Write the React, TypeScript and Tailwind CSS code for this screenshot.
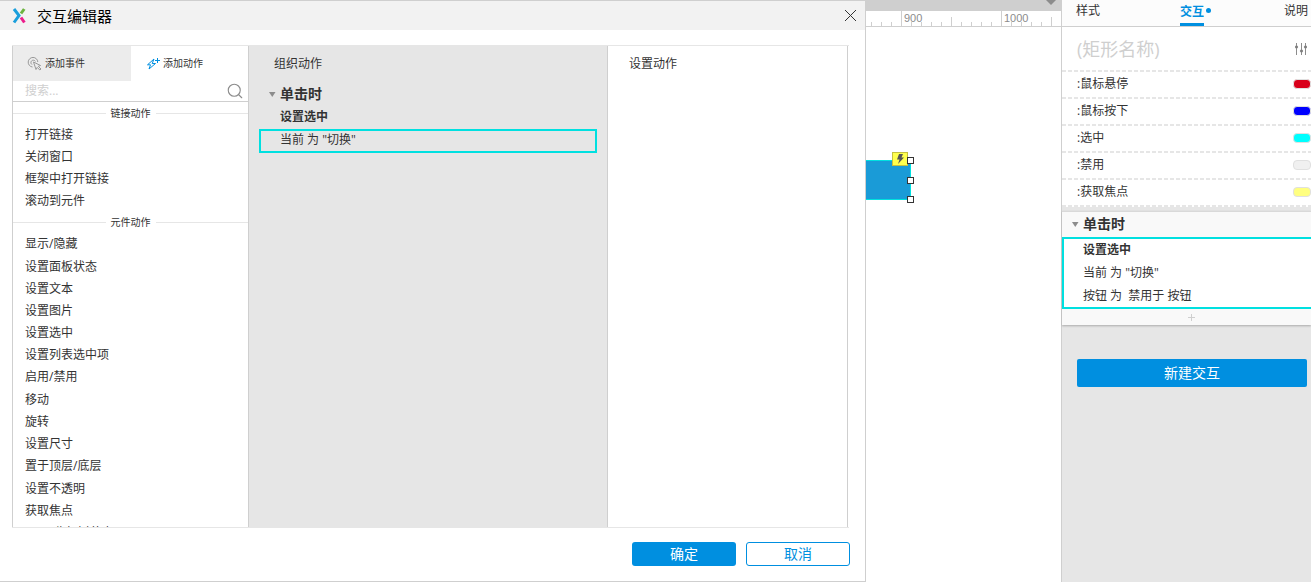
import { useState } from 'react'
import { Search } from 'lucide-react'

const sections = [
  {
    title: '链接动作',
    actions: ['打开链接', '关闭窗口', '框架中打开链接', '滚动到元件'],
  },
  {
    title: '元件动作',
    actions: [
      '显示/隐藏',
      '设置面板状态',
      '设置文本',
      '设置图片',
      '设置选中',
      '设置列表选中项',
      '启用/禁用',
      '移动',
      '旋转',
      '设置尺寸',
      '置于顶层/底层',
      '设置不透明',
      '获取焦点',
      '展开/收起树节点',
    ],
  },
]

const styleStates = [
  { name: ':鼠标悬停', color: 'bg-[#d9001b]' },
  { name: ':鼠标按下', color: 'bg-[#0000ff]' },
  { name: ':选中', color: 'bg-[#00ffff]' },
  { name: ':禁用', color: 'bg-[#f0f0f0]' },
  { name: ':获取焦点', color: 'bg-[#ffff80]' },
]

const ticks = Array.from({ length: 19 }, (_, i) => 870 + i * 10)

function Logo() {
  return (
    <svg className="h-4 w-4" viewBox="0 0 16 16" fill="none" strokeWidth="3">
      <path d="M3 1 L8 7.5 L3 14.5" stroke="#1a9fdc" />
      <path d="M13.2 1 L10 5.5" stroke="#6cb33f" />
      <path d="M10 9.5 L13.4 14.5" stroke="#ec1c8c" />
    </svg>
  )
}

function ClickIcon() {
  return (
    <svg className="h-4 w-4" viewBox="0 0 16 16" fill="none" stroke="#999">
      <path d="M5.5 11 A4.8 4.8 0 1 1 10.8 6" />
      <path d="M5 8.6 A2.4 2.4 0 1 1 8.4 5.4" />
      <path d="M6.5 6 L13.5 9.5 L11.3 10.3 L14 13 L12.8 14 L10.2 11.4 L9 13.5 Z" fill="#ececec" />
    </svg>
  )
}

function BoltPlusIcon() {
  return (
    <svg className="h-4 w-4" viewBox="0 0 16 16" fill="none" stroke="#008fe0">
      <path d="M9 3 L2.5 8.8 H5.5 L4 13 L10.5 7.5 H7.2 Z" />
      <path d="M12.5 2 V7 M10 4.5 H15" />
    </svg>
  )
}

function Caret() {
  return (
    <svg className="h-2 w-2" viewBox="0 0 8 8" fill="#8c8c8c">
      <path d="M1 2 H7.5 L4.25 7 Z" />
    </svg>
  )
}

function DashedLine() {
  return <div className="h-0.5 bg-[repeating-linear-gradient(90deg,#e6e6e6_0_4px,#fff_4px_6px)]" />
}

function ActionList() {
  return (
    <div className="min-h-0 flex-1 overflow-hidden pt-px">
      {sections.map((section) => (
        <section key={section.title}>
          <h3 className="flex h-[21px] items-center gap-[5px] text-[10px]">
            <span className="h-px flex-1 bg-[#e6e6e6]" />
            {section.title}
            <span className="h-px flex-1 bg-[#e6e6e6]" />
          </h3>
          <ul>
            {section.actions.map((action) => (
              <li key={action}>
                <button
                  className={`flex w-full px-3 text-left leading-[22px] ${action.includes('/') ? 'h-[23px]' : 'h-[22px]'}`}
                >
                  {action}
                </button>
              </li>
            ))}
          </ul>
        </section>
      ))}
    </div>
  )
}

function EditorDialog() {
  const [query, setQuery] = useState('')

  return (
    <div
      role="dialog"
      aria-label="交互编辑器"
      className="flex w-[866px] shrink-0 flex-col border-t border-r border-b border-[#cfcfcf] bg-white"
    >
      <header className="flex h-[29px] shrink-0 items-center gap-2.5 bg-[#f2f2f2] pr-2 pl-[11px]">
        <Logo />
        <h1 className="flex-1 text-[15px] leading-6 text-black">交互编辑器</h1>
        <button aria-label="关闭">
          <svg className="h-[13px] w-[13px]" viewBox="0 0 13 13" stroke="#333">
            <path d="M1 1 L12 12 M12 1 L1 12" />
          </svg>
        </button>
      </header>

      <div className="mt-[15px] mr-4 ml-3 flex min-h-0 flex-1 border-y border-[#e6e6e6] pr-px">
        <div className="flex w-[236px] flex-col border-l border-[#cfcfcf]">
          <div className="flex h-[35px] shrink-0 text-[10px]">
            <button className="flex w-[118px] items-center gap-0.5 bg-[#ececec] pl-3.5">
              <ClickIcon />
              添加事件
            </button>
            <button className="flex flex-1 items-center gap-0.5 pl-3.5">
              <BoltPlusIcon />
              添加动作
            </button>
          </div>
          <label className="flex h-[21px] shrink-0 items-center border-b border-[#cfcfcf] pr-1 pl-3">
            <input
              value={query}
              onChange={(e) => setQuery(e.target.value)}
              placeholder="搜索..."
              aria-label="搜索"
              className="min-w-0 flex-1 outline-none placeholder:text-[#cfcfcf]"
            />
            <Search className="h-[18px] w-[18px] text-[#8c8c8c]" strokeWidth={1.5} />
          </label>
          <ActionList />
        </div>

        <div className="flex-1 border-x border-[#cfcfcf] bg-[#e6e6e6] px-2.5 pt-2">
          <h2 className="px-[15px] leading-5">组织动作</h2>
          <div className="mt-2 flex h-[23px] items-center gap-1 pl-[9px] text-sm font-bold">
            <Caret />
            单击时
          </div>
          <p className="pl-[21px] leading-6 font-bold">设置选中</p>
          <p className="h-6 border-2 border-[#00e0e0] pl-[19px] leading-[18px]">当前 为 "切换"</p>
        </div>

        <div className="w-[240px] border-r border-[#cfcfcf] px-[21px] pt-2">
          <h2 className="leading-5">设置动作</h2>
        </div>
      </div>

      <footer className="flex shrink-0 justify-end gap-2.5 px-[15px] pt-3.5 pb-[15px] text-sm">
        <button className="h-6 w-[104px] rounded-[3px] bg-[#008fe0] leading-6 text-white">确定</button>
        <button className="h-6 w-[104px] rounded-[3px] border border-[#008fe0] leading-[22px] text-[#008fe0]">
          取消
        </button>
      </footer>
    </div>
  )
}

function Canvas() {
  return (
    <main className="relative min-w-0 flex-1 overflow-hidden bg-white">
      <div className="flex h-[11px] justify-end bg-[#cfcfcf] pr-1">
        <svg className="h-[5px] w-3" viewBox="0 0 12 5" fill="#8c8c8c">
          <path d="M1 0 H11 L6 5 Z" />
        </svg>
      </div>
      <div className="flex h-4 items-end overflow-hidden border-b border-[#cfcfcf] pl-[5px]">
        {ticks.map((t) => (
          <span
            key={t}
            className={`w-2.5 shrink-0 border-l border-[#cfcfcf] pl-0.5 font-['Liberation_Sans'] text-[11px] leading-[14px] whitespace-nowrap text-[#8c8c8c] ${
              t % 100 === 0 ? 'h-[15px]' : t % 50 === 0 ? 'h-[9px]' : 'h-1'
            }`}
          >
            {t % 100 === 0 ? t : ''}
          </span>
        ))}
      </div>

      {/* selected widget */}
      <div className="absolute top-40 left-0 h-10 w-[45px] border-y border-r border-[#00e0e0] bg-[#1a9bd7]">
        <span className="absolute -top-[9px] right-[2px] flex h-3.5 w-4 items-center justify-center border border-[#c4c040] bg-[#ffff4d]">
          <svg className="h-2.5 w-2.5" viewBox="0 0 10 10" fill="#555">
            <path d="M4 0 H8 L6.5 3.5 H9 L3 10 L4.5 5.5 H2 Z" />
          </svg>
        </span>
        <span className="absolute -top-1 -right-1 h-[7px] w-[7px] border border-[#333] bg-white" />
        <span className="absolute top-4 -right-1 h-[7px] w-[7px] border border-[#333] bg-white" />
        <span className="absolute -right-1 -bottom-1 h-[7px] w-[7px] border border-[#333] bg-white" />
      </div>
    </main>
  )
}

function Inspector() {
  const [name, setName] = useState('')

  return (
    <aside className="w-[250px] shrink-0 border-l border-[#cfcfcf] bg-[#e6e6e6]">
      <nav className="flex h-[27px] items-start justify-between border-b border-[#cfcfcf] bg-[#fcfcfc] pr-[3px] pl-3.5">
        <button className="leading-[22px]">样式</button>
        <button className="relative h-[26px] border-b-[3px] border-[#008fe0] leading-[22px] font-bold text-[#008fe0]">
          交互
          <span className="absolute top-2 -right-[7px] h-[5px] w-[5px] rounded-full bg-[#008fe0]" />
        </button>
        <button className="leading-[22px]">说明</button>
      </nav>

      <div className="flex h-[43px] items-center bg-white pr-1 pl-[15px]">
        <input
          value={name}
          onChange={(e) => setName(e.target.value)}
          placeholder="(矩形名称)"
          aria-label="矩形名称"
          className="min-w-0 flex-1 text-lg outline-none placeholder:text-[#cfcfcf]"
        />
        <button aria-label="设置">
          <svg className="h-3 w-3" viewBox="0 0 12 12" stroke="#8c8c8c" fill="#777">
            <path d="M1.5 0 V12 M6.5 0 V12 M10.5 0 V12" />
            <circle cx="1.5" cy="4" r="1.2" />
            <circle cx="6.5" cy="8" r="1.2" />
            <circle cx="10.5" cy="4" r="1.2" />
          </svg>
        </button>
      </div>

      <DashedLine />
      <ul className="bg-white">
        {styleStates.map((s) => (
          <li key={s.name}>
            <div className="flex h-[25px] items-center justify-between pb-0.5 pl-[15px]">
              {s.name}
              <span className={`h-2.5 w-[18px] rounded-sm border border-[#e0e0e0] ${s.color}`} />
            </div>
            <DashedLine />
          </li>
        ))}
      </ul>

      <section className="mt-1 border-t border-[#d9d9d9] bg-[#f9f9f9] shadow-[0_1px_2px_#aaa]">
        <h2 className="flex h-[25px] items-center gap-1 pb-0.5 pl-[9px] text-sm font-bold">
          <Caret />
          单击时
        </h2>
        <div className="border-y-2 border-l-2 border-[#00e0e0] bg-white pl-[19px]">
          <p className="leading-[22px] font-bold">设置选中</p>
          <p className="leading-[23px]">当前 为 "切换"</p>
          <p className="leading-[23px] whitespace-pre">按钮 为  禁用于 按钮</p>
        </div>
        <button aria-label="添加动作" className="flex h-4 w-full items-center justify-center pl-2.5">
          <svg className="h-[7px] w-[7px]" viewBox="0 0 7 7" stroke="#cfcfcf">
            <path d="M3.5 0 V7 M0 3.5 H7" />
          </svg>
        </button>
      </section>

      <div className="pt-[34px] pr-1 pl-[15px]">
        <button className="h-7 w-full rounded-[2px] bg-[#008fe0] text-sm text-white">新建交互</button>
      </div>
    </aside>
  )
}

export default function App() {
  return (
    <div className="flex h-screen overflow-hidden font-['Open_Sans','Noto_Sans_CJK_SC',sans-serif] text-xs text-[#333]">
      <EditorDialog />
      <Canvas />
      <Inspector />
    </div>
  )
}
